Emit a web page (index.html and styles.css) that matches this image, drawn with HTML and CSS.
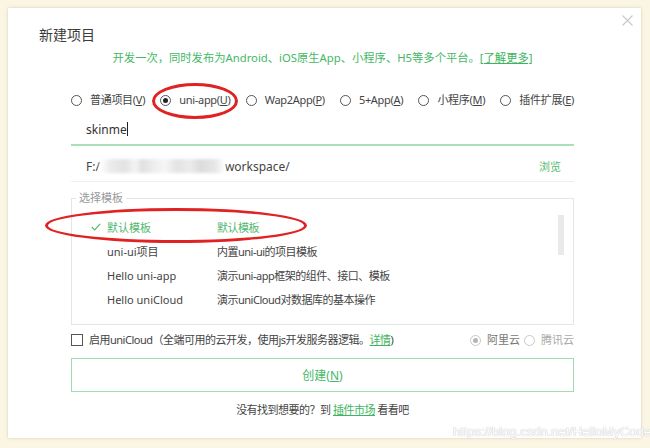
FILE: index.html
```html
<!DOCTYPE html>
<html>
<head>
    <meta charset="utf-8">
    <meta name="viewport" content="width=device-width, initial-scale=1">
    <link rel="stylesheet" href="styles.css">
</head>
<body>
    <div class="dialog">
        <span class="close-button">
            <svg width="11" height="11" viewBox="0 0 11 11"><path d="M0.5 0.5 L10.5 10.5 M10.5 0.5 L0.5 10.5" stroke="#c8c8c8" stroke-width="1.1" fill="none"/></svg>
        </span>
        <h1 class="title">新建项目</h1>

        <div class="content">
            <p class="intro">开发一次，同时发布为Android、iOS原生App、小程序、H5等多个平台。<a class="link">[了解更多]</a></p>

            <div class="types">
                <label class="radio"><span class="dot"></span>普通项目(<u>V</u>)</label>
                <label class="radio"><span class="dot checked"></span>uni-app(<u>U</u>)</label>
                <label class="radio"><span class="dot"></span>Wap2App(<u>P</u>)</label>
                <label class="radio"><span class="dot"></span>5+App(<u>A</u>)</label>
                <label class="radio"><span class="dot"></span>小程序(<u>M</u>)</label>
                <label class="radio"><span class="dot"></span>插件扩展(<u>E</u>)</label>
            </div>

            <div class="name-row">skinme<span class="caret"></span></div>

            <div class="path-row">
                <span class="path">F:/<span class="blur"></span>workspace/</span>
                <span class="browse">浏览</span>
            </div>

            <fieldset class="templates">
                <legend>选择模板</legend>
                <div class="list">
                    <div class="rows">
                        <div class="row selected">
                            <svg class="check" width="10" height="8" viewBox="0 0 10 8"><polyline points="0.8,4 3.6,6.8 9.2,0.8" fill="none" stroke="#52b86e" stroke-width="1.2"/></svg>
                            <span>默认模板</span>
                            <span class="desc">默认模板</span>
                        </div>
                        <div class="row">
                            <i></i>
                            <span>uni-ui项目</span>
                            <span class="desc">内置uni-ui的项目模板</span>
                        </div>
                        <div class="row">
                            <i></i>
                            <span>Hello uni-app</span>
                            <span class="desc">演示uni-app框架的组件、接口、模板</span>
                        </div>
                        <div class="row">
                            <i></i>
                            <span>Hello uniCloud</span>
                            <span class="desc">演示uniCloud对数据库的基本操作</span>
                        </div>
                    </div>
                    <div class="thumb"></div>
                </div>
            </fieldset>

            <div class="cloud-row">
                <label class="check-label"><span class="box"></span>启用uniCloud（全端可用的云开发，使用js开发服务器逻辑。<a class="link">详情</a>)</label>
                <div class="providers">
                    <label class="radio off"><span class="dot checked"></span><span class="aliyun">阿里云</span></label>
                    <label class="radio off"><span class="dot"></span>腾讯云</label>
                </div>
            </div>

            <button class="create">创建(<u>N</u>)</button>

            <p class="footer">没有找到想要的？到 <a class="link">插件市场</a> 看看吧</p>
        </div>

        <!-- 截图上的红色标注 -->
        <span class="mark mark-type"></span>
        <span class="mark mark-tpl"></span>
    </div>
    <div class="watermark">https://blog.csdn.net/HelloMyCode</div>
</body>
</html>
```

FILE: styles.css
```css
body {
    margin: 0;
    padding: 8px;
    background-color: #fbf6e4;
    font-family: "Noto Sans", "Noto Sans CJK SC", sans-serif;
    color: #555;
    font-size: 11px;
}

.dialog {
    position: relative;
    width: 633px;
    height: 430px;
    box-sizing: border-box;
    background-color: #fff;
    box-shadow: 0 0 3px rgba(170, 160, 120, 0.45);
}

.close-button {
    position: absolute;
    top: 7px;
    right: 8px;
    line-height: 0;
}

.title {
    margin: 0;
    padding: 17px 0 0 31px;
    font-size: 14px;
    line-height: 20px;
    font-weight: normal;
    color: #3a3a3a;
}

.content {
    margin: 0 67px 0 63px;
}

.link {
    color: #3cb55e;
    text-decoration: underline;
}

.intro {
    margin: 5px 0 0;
    font-size: 11.3px;
    line-height: 16px;
    text-align: center;
    color: #44b866;
}

/* 项目类型 */
.types {
    display: flex;
    justify-content: space-between;
    margin-top: 24px;
    line-height: 20px;
    letter-spacing: -0.3px;
}

.radio {
    display: flex;
    align-items: center;
    color: #444;
}

.dot {
    position: relative;
    width: 9px;
    height: 9px;
    border: 1px solid #555;
    border-radius: 50%;
    margin-right: 8px;
    background-color: #fff;
}

.dot.checked:after {
    content: "";
    position: absolute;
    top: 2px;
    left: 2px;
    width: 5px;
    height: 5px;
    border-radius: 50%;
    background-color: #222;
}

.radio u {
    text-decoration-thickness: 1px;
}

.name-row {
    margin-top: 6px;
    height: 28px;
    line-height: 28px;
    padding-left: 15px;
    border-bottom: 2px solid #a9dfb9;
    font-size: 12px;
    color: #333;
}

.caret {
    display: inline-block;
    width: 1px;
    height: 14px;
    background-color: #222;
    vertical-align: -2px;
}

.path-row {
    display: flex;
    justify-content: space-between;
    align-items: center;
    margin-top: 5px;
    height: 30px;
    padding: 0 13px 0 15px;
    border-bottom: 1px solid #eeeeee;
    font-size: 12px;
    color: #444;
}

.blur {
    display: inline-block;
    width: 125px;
    height: 14px;
    vertical-align: -2px;
    background: linear-gradient(90deg, #fff 0, #ececec 8%, #e2e2e2 20%, #f4f4f4 28%, #e0e0e0 34%, #efefef 44%, #f5f5f5 52%, #e3e3e3 62%, #ececec 72%, #dcdcdc 80%, #e6e6e6 92%, #fff 100%);
    filter: blur(1.5px);
}

.browse {
    color: #55bb72;
    font-size: 11px;
}

/* 模板列表 */
.templates {
    margin: 9px 0 0;
    padding: 0 0 13px;
    border: 1px solid #e5e5e5;
    min-width: 0;
}

.templates legend {
    margin-left: 4px;
    padding: 0 3px;
    line-height: 14px;
    color: #999;
}

.list {
    display: flex;
    padding-top: 10px;
}

.rows {
    flex: 1;
}

.row {
    display: grid;
    grid-template-columns: 35px 110px 1fr;
    align-items: center;
    height: 24px;
    color: #444;
}

.row .desc {
    letter-spacing: -0.5px;
}

.row .check {
    justify-self: end;
    margin-right: 6px;
}

.row.selected {
    color: #52b86e;
}

.thumb {
    width: 6px;
    height: 40px;
    margin-right: 9px;
    background-color: #e9e9e9;
}

/* uniCloud */
.cloud-row {
    display: flex;
    justify-content: space-between;
    align-items: center;
    margin-top: 5px;
    line-height: 20px;
}

.check-label {
    display: flex;
    align-items: center;
    color: #444;
    letter-spacing: -0.5px;
}

.box {
    width: 10px;
    height: 10px;
    border: 1px solid #555;
    margin-right: 6px;
}

.providers {
    display: flex;
    gap: 4px;
}

.radio.off {
    color: #aaa;
}

.radio.off .dot {
    border-color: #c8c8c8;
    margin-right: 6px;
}

.radio.off .dot.checked:after {
    background-color: #b5b5b5;
}

.aliyun {
    color: #777;
}

.create {
    display: block;
    width: 100%;
    height: 34px;
    margin-top: 8px;
    border: 1px solid #a3dbb3;
    background-color: #fff;
    font-family: inherit;
    font-size: 12px;
    color: #47b867;
}

.footer {
    margin: 10px 0 0;
    line-height: 16px;
    text-align: center;
    color: #444;
    letter-spacing: -0.5px;
}

/* 标注 */
.mark {
    position: absolute;
    border: 3px solid #e02222;
    border-radius: 50%;
}

.mark-type {
    left: 144px;
    top: 75px;
    width: 80px;
    height: 30px;
}

.mark-tpl {
    left: 37px;
    top: 200px;
    width: 256px;
    height: 29px;
}

.watermark {
    position: absolute;
    left: 453px;
    top: 424px;
    white-space: nowrap;
    font-family: "Liberation Sans", sans-serif;
    font-size: 13px;
    color: #fff;
    text-shadow: 0 0 1px #c4c4c4, 0 0 1px #c4c4c4;
}
```
